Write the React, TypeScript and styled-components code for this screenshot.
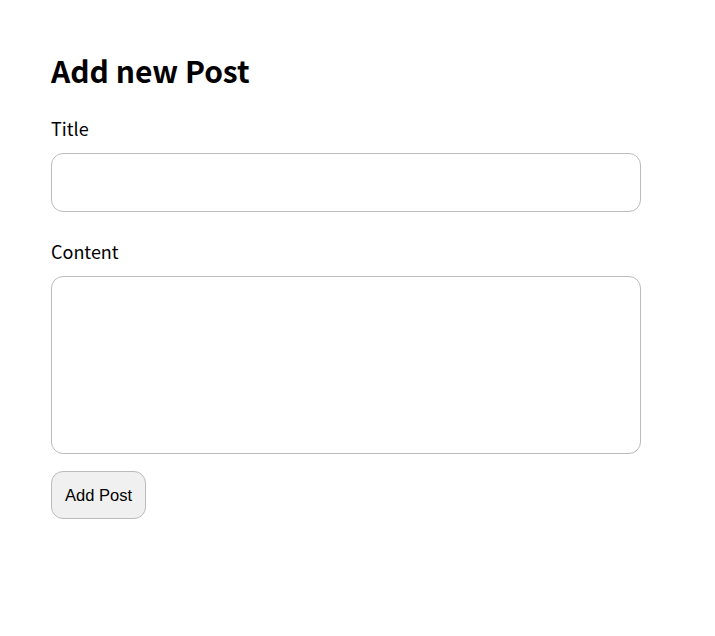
import styled, { createGlobalStyle } from 'styled-components'

const GlobalStyle = createGlobalStyle`
  body {
    margin: 0;
    background: #fff;
    font-family: 'Noto Sans CJK KR', 'Noto Sans', sans-serif;
    color: #000;
  }
`

const Page = styled.div`
  padding: 50px 51px;
`

const Form = styled.form`
  display: flex;
  flex-direction: column;
  width: 590px;
`

const Heading = styled.h2`
  margin: 0 0 26px;
  font-size: 30px;
  font-weight: 700;
  line-height: 40px;
`

const Label = styled.label`
  font-size: 18px;
  line-height: 24px;
  margin-bottom: 13px;
`

const Field = styled.input`
  box-sizing: border-box;
  height: 59px;
  border: 1px solid #bbb;
  border-radius: 12px;
  margin-bottom: 27px;
  padding: 0 12px;
  font-size: 16px;
`

const Area = styled.textarea`
  box-sizing: border-box;
  height: 178px;
  border: 1px solid #bbb;
  border-radius: 12px;
  margin-bottom: 17px;
  padding: 12px;
  font-size: 16px;
  resize: none;
`

const Button = styled.button`
  align-self: flex-start;
  box-sizing: border-box;
  width: 95px;
  height: 48px;
  border: 1px solid #bbb;
  border-radius: 12px;
  background: #f0f0f0;
  font-family: 'Liberation Sans', Arial, sans-serif;
  font-size: 16.5px;
  color: #000;
`

export default function App() {
  return (
    <Page>
      <GlobalStyle />
      <Form onSubmit={(e) => e.preventDefault()}>
        <Heading>Add new Post</Heading>
        <Label htmlFor="title">Title</Label>
        <Field id="title" type="text" />
        <Label htmlFor="content">Content</Label>
        <Area id="content" />
        <Button type="submit">Add Post</Button>
      </Form>
    </Page>
  )
}
